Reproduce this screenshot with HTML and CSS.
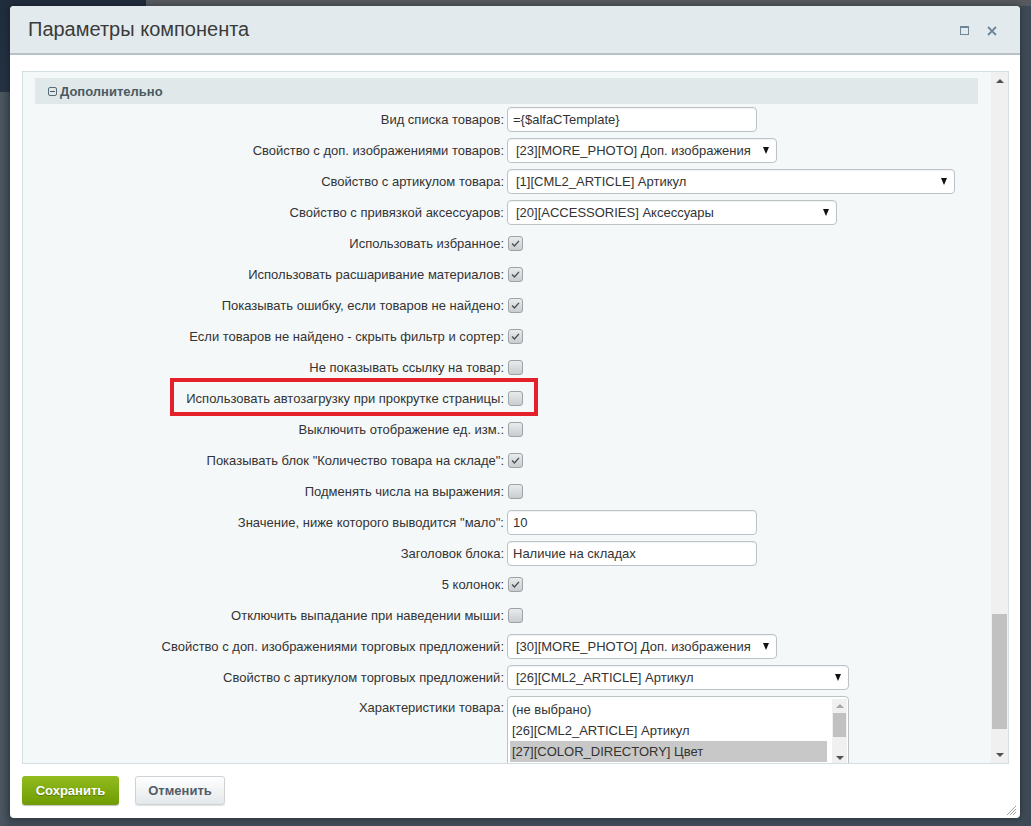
FILE: index.html
```html
<!DOCTYPE html>
<html lang="ru">
<head>
<meta charset="utf-8">
<title>Параметры компонента</title>
<link rel="stylesheet" href="styles.css">
</head>
<body>
<div class="desk">
  <div class="dialog">
    <div class="dlg-head">
      <h1 class="dlg-title">Параметры компонента</h1>
      <div class="dlg-tools">
        <span class="tool-max"></span>
        <svg class="tool-close" width="10" height="10" viewBox="0 0 10 10"><path d="M1 1 L9 9 M9 1 L1 9" stroke="#6f8696" stroke-width="1.8" fill="none"/></svg>
      </div>
    </div>
    <div class="dlg-body">
      <div class="panel">
        <div class="scroll-area">
          <div class="section-head"><span class="minus-box"></span>Дополнительно</div>
          <div class="rows">
            <div class="row"><span class="lbl">Вид списка товаров:</span><div class="ctl"><span class="input w250">={$alfaCTemplate}</span></div></div>
            <div class="row"><span class="lbl">Свойство с доп. изображениями товаров:</span><div class="ctl"><span class="select w270"><span class="sv">[23][MORE_PHOTO] Доп. изображения</span><span class="arr"></span></span></div></div>
            <div class="row"><span class="lbl">Свойство с артикулом товара:</span><div class="ctl"><span class="select w448"><span class="sv">[1][CML2_ARTICLE] Артикул</span><span class="arr"></span></span></div></div>
            <div class="row"><span class="lbl">Свойство с привязкой аксессуаров:</span><div class="ctl"><span class="select w330"><span class="sv">[20][ACCESSORIES] Аксессуары</span><span class="arr"></span></span></div></div>
            <div class="row"><span class="lbl">Использовать избранное:</span><div class="ctl"><span class="cb on"><svg viewBox="0 0 15 15"><path d="M3.5 7.5 L6.3 10.3 L11.5 4.5" stroke="#4a4f55" stroke-width="1.6" fill="none"/></svg></span></div></div>
            <div class="row"><span class="lbl">Использовать расшаривание материалов:</span><div class="ctl"><span class="cb on"><svg viewBox="0 0 15 15"><path d="M3.5 7.5 L6.3 10.3 L11.5 4.5" stroke="#4a4f55" stroke-width="1.6" fill="none"/></svg></span></div></div>
            <div class="row"><span class="lbl">Показывать ошибку, если товаров не найдено:</span><div class="ctl"><span class="cb on"><svg viewBox="0 0 15 15"><path d="M3.5 7.5 L6.3 10.3 L11.5 4.5" stroke="#4a4f55" stroke-width="1.6" fill="none"/></svg></span></div></div>
            <div class="row"><span class="lbl">Если товаров не найдено - скрыть фильтр и сортер:</span><div class="ctl"><span class="cb on"><svg viewBox="0 0 15 15"><path d="M3.5 7.5 L6.3 10.3 L11.5 4.5" stroke="#4a4f55" stroke-width="1.6" fill="none"/></svg></span></div></div>
            <div class="row"><span class="lbl">Не показывать ссылку на товар:</span><div class="ctl"><span class="cb"></span></div></div>
            <div class="row marked"><span class="lbl">Использовать автозагрузку при прокрутке страницы:</span><div class="ctl"><span class="cb"></span></div><span class="highlight"></span></div>
            <div class="row"><span class="lbl">Выключить отображение ед. изм.:</span><div class="ctl"><span class="cb"></span></div></div>
            <div class="row"><span class="lbl">Показывать блок "Количество товара на складе":</span><div class="ctl"><span class="cb on"><svg viewBox="0 0 15 15"><path d="M3.5 7.5 L6.3 10.3 L11.5 4.5" stroke="#4a4f55" stroke-width="1.6" fill="none"/></svg></span></div></div>
            <div class="row"><span class="lbl">Подменять числа на выражения:</span><div class="ctl"><span class="cb"></span></div></div>
            <div class="row"><span class="lbl">Значение, ниже которого выводится "мало":</span><div class="ctl"><span class="input w250">10</span></div></div>
            <div class="row"><span class="lbl">Заголовок блока:</span><div class="ctl"><span class="input w250">Наличие на складах</span></div></div>
            <div class="row"><span class="lbl">5 колонок:</span><div class="ctl"><span class="cb on"><svg viewBox="0 0 15 15"><path d="M3.5 7.5 L6.3 10.3 L11.5 4.5" stroke="#4a4f55" stroke-width="1.6" fill="none"/></svg></span></div></div>
            <div class="row"><span class="lbl">Отключить выпадание при наведении мыши:</span><div class="ctl"><span class="cb"></span></div></div>
            <div class="row"><span class="lbl">Свойство с доп. изображениями торговых предложений:</span><div class="ctl"><span class="select w270"><span class="sv">[30][MORE_PHOTO] Доп. изображения</span><span class="arr"></span></span></div></div>
            <div class="row"><span class="lbl">Свойство с артикулом торговых предложений:</span><div class="ctl"><span class="select w342"><span class="sv">[26][CML2_ARTICLE] Артикул</span><span class="arr"></span></span></div></div>
            <div class="row row-top"><span class="lbl">Характеристики товара:</span>
              <div class="ctl">
                <div class="listbox">
                  <div class="opts">
                    <div class="opt">(не выбрано)</div>
                    <div class="opt">[26][CML2_ARTICLE] Артикул</div>
                    <div class="opt sel">[27][COLOR_DIRECTORY] Цвет</div>
                  </div>
                  <div class="lb-scroll">
                    <span class="lb-up"></span>
                    <span class="lb-thumb"></span>
                    <span class="lb-fill"></span>
                    <span class="lb-down"></span>
                  </div>
                </div>
              </div>
            </div>
          </div>
        </div>
        <div class="vscroll">
          <span class="vs-arrow"><span class="tri-up"></span></span>
          <div class="vs-track"><span class="vs-thumb"></span></div>
          <span class="vs-arrow"><span class="tri-down"></span></span>
        </div>
      </div>
    </div>
    <div class="dlg-foot">
      <span class="btn btn-save">Сохранить</span>
      <span class="btn btn-cancel">Отменить</span>
    </div>
    <svg class="grip" width="12" height="12" viewBox="0 0 12 12"><path d="M11 2 L2 11 M11 5 L5 11 M11 8 L8 11" stroke="#9aa3a8" stroke-width="1" fill="none"/></svg>
  </div>
</div>
</body>
</html>
```
FILE: styles.css
```css
html, body {
  margin: 0;
  padding: 0;
}
body {
  font-family: "Liberation Sans", Arial, sans-serif;
  font-size: 13px;
  color: #333;
}
.desk {
  width: 1031px;
  height: 826px;
  box-sizing: border-box;
  padding: 6px 11px 8px 10px;
  background:
    linear-gradient(#1f2c3b, #243244) 0 0 / 146px 92px no-repeat,
    linear-gradient(#56595e, #56595e) 0 0 / 100% 6px no-repeat,
    linear-gradient(90deg, #4b5661 0, #3f4a55 10px, #3d4a56 1020px, #3d4a56 100%);
  overflow: hidden;
}
.dialog {
  position: relative;
  width: 1010px;
  height: 812px;
  background: #fff;
  border-radius: 4px;
  display: flex;
  flex-direction: column;
  overflow: hidden;
  box-shadow: 0 0 6px rgba(0,0,0,0.4);
}
.dlg-head {
  height: 47px;
  flex: none;
  background: #e2eaed;
  border-bottom: 2px solid #b8c1c5;
  display: flex;
  align-items: center;
  justify-content: space-between;
  padding: 0 23px 0 18px;
}
.dlg-title {
  margin: 0;
  font-weight: normal;
  font-size: 20px;
  color: #3a3a3a;
  letter-spacing: 0;
}
.dlg-tools {
  display: flex;
  align-items: center;
  gap: 18px;
  padding-top: 2px;
}
.tool-max {
  display: block;
  width: 7px;
  height: 6px;
  border: 1.5px solid #6f8696;
  border-top-width: 2px;
}
.tool-close {
  display: block;
}
.dlg-body {
  flex: none;
  padding: 16px 11px 0 12px;
}
.panel {
  height: 693px;
  box-sizing: border-box;
  border: 1px solid #d3dee3;
  background: #f5f8f9;
  display: flex;
  overflow: hidden;
}
.scroll-area {
  flex: 1;
  overflow: hidden;
  min-width: 0;
}
.section-head {
  margin: 6px 13px 0 12px;
  height: 26px;
  background: #e0e8ea;
  display: flex;
  align-items: center;
  padding-left: 13px;
  font-weight: bold;
  font-size: 13px;
  color: #4a5a62;
}
.minus-box {
  width: 7px;
  height: 7px;
  border: 1px solid #5a6a72;
  border-radius: 2px;
  margin-right: 3px;
  position: relative;
}
.minus-box::after {
  content: "";
  position: absolute;
  left: 1px;
  right: 1px;
  top: 3px;
  height: 1px;
  background: #4a5a62;
}
.rows {
  display: flex;
  flex-direction: column;
}
.row {
  position: relative;
  height: 31px;
  display: grid;
  grid-template-columns: 481px 1fr;
  column-gap: 3px;
  align-items: center;
}
.lbl {
  text-align: right;
  color: #333;
  white-space: nowrap;
}
.ctl {
  display: flex;
  align-items: center;
}
.input, .select {
  box-sizing: border-box;
  height: 25px;
  border: 1px solid #bcc3c6;
  border-radius: 4px;
  background: #fff;
  box-shadow: inset 0 1px 1px rgba(0,0,0,0.06);
  display: flex;
  align-items: center;
  color: #333;
  font-size: 13px;
  white-space: nowrap;
}
.input {
  padding-left: 5px;
}
.select {
  padding: 0 7px 0 8px;
  justify-content: space-between;
}
.w250 { width: 250px; }
.w270 { width: 270px; }
.w330 { width: 330px; }
.w342 { width: 342px; }
.w448 { width: 448px; }
.arr {
  width: 0;
  height: 0;
  border-left: 3.5px solid transparent;
  border-right: 3.5px solid transparent;
  border-top: 7px solid #111;
}
.cb {
  box-sizing: border-box;
  width: 15px;
  height: 15px;
  margin-left: 1px;
  border: 1px solid #9ea3a7;
  border-radius: 3px;
  background: linear-gradient(#e9ebec, #c9cdd0);
  display: block;
}
.cb svg {
  display: block;
  width: 13px;
  height: 13px;
}
.highlight {
  position: absolute;
  left: 147px;
  top: -5px;
  width: 368px;
  height: 38px;
  box-sizing: border-box;
  border: 4px solid #e4202a;
  pointer-events: none;
}
.row-top {
  height: auto;
  align-items: start;
  padding-top: 3px;
}
.row-top .lbl {
  padding-top: 4px;
}
.listbox {
  box-sizing: border-box;
  width: 342px;
  height: 112px;
  border: 1px solid #bcc3c6;
  border-radius: 4px;
  background: #fff;
  display: flex;
  padding: 2px 1px 2px 2px;
  overflow: hidden;
}
.opts {
  flex: 1;
  min-width: 0;
  padding-top: 0;
}
.opt {
  height: 21px;
  line-height: 21px;
  padding-left: 2px;
  color: #333;
  white-space: nowrap;
}
.opt.sel {
  background: #c8c8c8;
}
.lb-scroll {
  width: 15px;
  flex: none;
  display: flex;
  flex-direction: column;
  align-items: center;
  background: #f0f0f0;
  margin-left: 5px;
}
.lb-up {
  margin-top: 5px;
  width: 0;
  height: 0;
  border-left: 4px solid transparent;
  border-right: 4px solid transparent;
  border-bottom: 4px solid #a7a7a7;
}
.lb-thumb {
  margin-top: 5px;
  width: 13px;
  height: 24px;
  background: #c1c1c1;
}
.lb-fill {
  height: 19px;
}
.lb-down {
  width: 0;
  height: 0;
  border-left: 4px solid transparent;
  border-right: 4px solid transparent;
  border-top: 4px solid #505050;
}
.vscroll {
  width: 17px;
  flex: none;
  background: #f0f0f0;
  display: flex;
  flex-direction: column;
}
.vs-arrow {
  height: 17px;
  flex: none;
  display: flex;
  align-items: center;
  justify-content: center;
}
.tri-up {
  width: 0;
  height: 0;
  border-left: 4px solid transparent;
  border-right: 4px solid transparent;
  border-bottom: 4px solid #505050;
}
.tri-down {
  width: 0;
  height: 0;
  border-left: 4px solid transparent;
  border-right: 4px solid transparent;
  border-top: 4px solid #505050;
}
.vs-track {
  flex: 1;
  display: flex;
  flex-direction: column;
  align-items: center;
}
.vs-thumb {
  margin-top: 525px;
  width: 15px;
  height: 115px;
  background: #c1c1c1;
}
.dlg-foot {
  flex: 1;
  display: flex;
  align-items: flex-start;
  padding: 12px 0 0 12px;
  gap: 16px;
}
.btn {
  box-sizing: border-box;
  height: 29px;
  border-radius: 3px;
  display: flex;
  align-items: center;
  justify-content: center;
  font-weight: bold;
  font-size: 13px;
}
.btn-save {
  width: 97px;
  color: #fff;
  background: linear-gradient(#92bc1f, #6f9c02);
  box-shadow: 0 1px 1px rgba(0,0,0,0.25);
  text-shadow: 0 1px 1px rgba(0,0,0,0.3);
}
.btn-cancel {
  width: 90px;
  color: #535c69;
  border: 1px solid #cdd3d6;
  background: linear-gradient(#ffffff, #e3e8ea);
  box-shadow: 0 1px 1px rgba(0,0,0,0.12);
}
.grip {
  position: absolute;
  right: 3px;
  bottom: 2px;
}
```
